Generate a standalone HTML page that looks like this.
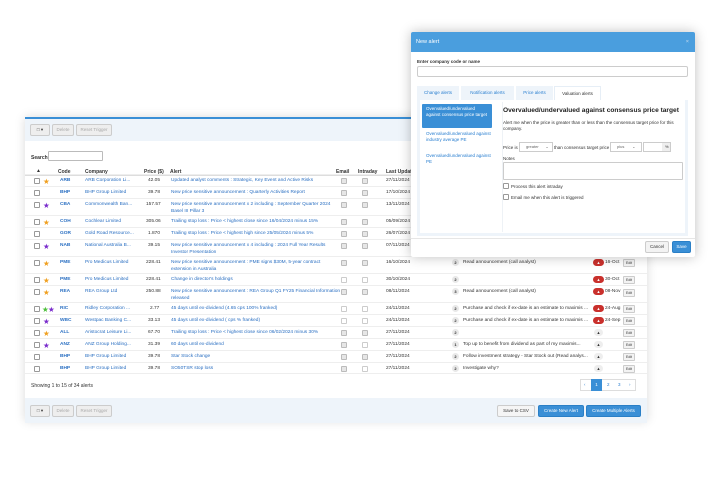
<!DOCTYPE html>
<html><head><meta charset="utf-8"><style>
*{box-sizing:border-box;margin:0;padding:0}
body{width:720px;height:500px;background:#fff;font-family:"Liberation Sans",sans-serif;font-size:5px;color:#333;position:relative;overflow:hidden}
.a{position:absolute;white-space:nowrap}
#panel{position:absolute;left:25px;top:117px;width:622px;height:304px;background:#fff;box-shadow:0 0 10px rgba(0,0,0,.15);border-top:2px solid #3a8fd6}
.band{position:absolute;left:0;width:622px;background:#eef4fa}
.btn{position:absolute;border:1px solid #ccc;background:#eee;border-radius:2px;color:#aaa;font-size:4.5px;text-align:center;line-height:10px;height:12px}
.cb{position:absolute;width:6px;height:6px;border:1px solid #999;border-radius:1px;background:#fff}
.gc{position:absolute;width:6px;height:6px;border:1px solid #bbb;background:#e6e6e6;border-radius:1px}
.ec{position:absolute;width:6px;height:6px;border:1px solid #ccc;background:#fff;border-radius:1px}
.b{color:#2a6fc2}
.code{color:#2a6fc2;font-weight:bold}
.st{position:absolute;font-size:7.5px;line-height:7px}
.bd{position:absolute;width:7px;height:7px;border-radius:50%;background:#e8e8e8;font-size:4px;text-align:center;line-height:7px;font-weight:bold}
.red{position:absolute;width:11px;height:7px;border-radius:4px;background:#c9302c;color:#fff;font-size:4px;text-align:center;line-height:7px}
.gr{position:absolute;width:9px;height:7px;border-radius:4px;background:#eee;color:#333;font-size:4px;text-align:center;line-height:7px}
.ed{position:absolute;width:12px;height:8px;border:1px solid #ccc;background:#f3f3f3;font-size:3.5px;text-align:center;line-height:6px;border-radius:1px}
#modal{position:absolute;left:411px;top:32px;width:284px;height:225px;background:#fff;box-shadow:0 0 12px rgba(0,0,0,.25);border-radius:2px}
.tab{position:absolute;top:54px;height:14px;background:#eef4fa;color:#2a7fd0;font-size:4.5px;line-height:14px;text-align:center}
.R{position:absolute;left:25px;width:622px;border-top:1px solid #eee;font-size:4.8px}
</style></head><body>
<div id="panel">
 <div class="band" style="top:0;height:22px"></div>
 <div class="btn" style="left:5px;top:5px;width:20px;color:#333">&#9633; ▾</div>
 <div class="btn" style="left:27px;top:5px;width:22px">Delete</div>
 <div class="btn" style="left:51px;top:5px;width:36px">Reset Trigger</div>
 <div class="a" style="left:6px;top:36px;font-weight:bold">Search:</div>
 <div class="a" style="left:23px;top:32px;width:55px;height:10px;border:1px solid #bbb;border-radius:1px"></div>
 <div class="a" style="left:0;top:48px;width:622px;height:9px;font-weight:bold;border-bottom:1px solid #ddd">
  <span class="a" style="left:11px;top:1px">▲</span><span class="a" style="left:33px;top:2px">Code</span><span class="a" style="left:60px;top:2px">Company</span><span class="a" style="left:119px;top:2px">Price ($)</span><span class="a" style="left:145px;top:2px">Alert</span><span class="a" style="left:311px;top:2px">Email</span><span class="a" style="left:333px;top:2px">Intraday</span><span class="a" style="left:361px;top:2px">Last Updated</span>
 </div>
 <div class="band" style="top:279px;height:25px"></div>
 <div class="a" style="left:6px;top:264px">Showing 1 to 15 of 34 alerts</div>
 <div class="btn" style="left:5px;top:286px;width:20px;color:#333">&#9633; ▾</div>
 <div class="btn" style="left:27px;top:286px;width:22px">Delete</div>
 <div class="btn" style="left:51px;top:286px;width:36px">Reset Trigger</div>
 <div class="btn" style="left:472px;top:286px;width:38px;color:#333;background:#f5f5f5">Save to CSV</div>
 <div class="btn" style="left:513px;top:286px;width:46px;color:#fff;background:#3a8fd6;border-color:#2a7fc6">Create New Alert</div>
 <div class="btn" style="left:561px;top:286px;width:55px;color:#fff;background:#3a8fd6;border-color:#2a7fc6">Create Multiple Alerts</div>
 <div class="a" style="left:555px;top:260px;width:56px;height:12px;border:1px solid #ddd;color:#2a7fd0;font-size:4.5px;line-height:10px">
  <span class="a" style="left:3px">‹</span><span class="a" style="left:10px;top:-1px;width:11px;height:12px;background:#3a8fd6;color:#fff;text-align:center;line-height:12px">1</span><span class="a" style="left:26px">2</span><span class="a" style="left:37px">3</span><span class="a" style="left:48px">›</span>
 </div>
</div>

<div class="R" style="top:174px;height:12px"><div class="cb" style="left:9px;top:3px"></div><span class="st" style="left:18px;top:3px;color:#f0a020">★</span><span class="a code" style="left:35px;top:3px">ARB</span><span class="a b" style="left:60px;top:3px">ARB Corporation Li...</span><span class="a" style="left:123px;top:3px">42.05</span><span class="a b" style="left:146px;top:3px">Updated analyst comments : Strategic, Key Event and Active Risks</span><span class="gc" style="left:316px;top:3px"></span><span class="gc" style="left:337px;top:3px"></span><span class="a" style="left:361px;top:3px">27/11/2024</span></div>
<div class="R" style="top:186px;height:12px"><div class="cb" style="left:9px;top:3px"></div><span class="a code" style="left:35px;top:3px">BHP</span><span class="a b" style="left:60px;top:3px">BHP Group Limited</span><span class="a" style="left:123px;top:3px">39.78</span><span class="a b" style="left:146px;top:3px">New price sensitive announcement : Quarterly Activities Report</span><span class="gc" style="left:316px;top:3px"></span><span class="gc" style="left:337px;top:3px"></span><span class="a" style="left:361px;top:3px">17/10/2024</span></div>
<div class="R" style="top:198px;height:17px"><div class="cb" style="left:9px;top:3px"></div><span class="st" style="left:18px;top:3px;color:#7a2ccc">★</span><span class="a code" style="left:35px;top:3px">CBA</span><span class="a b" style="left:60px;top:3px">Commonwealth Ban...</span><span class="a" style="left:121px;top:3px">157.57</span><span class="a b" style="left:146px;top:3px;line-height:6.5px">New price sensitive announcement x 2 including : September Quarter 2024<br>Basel III Pillar 3</span><span class="gc" style="left:316px;top:3px"></span><span class="gc" style="left:337px;top:3px"></span><span class="a" style="left:361px;top:3px">13/11/2024</span></div>
<div class="R" style="top:215px;height:12px"><div class="cb" style="left:9px;top:3px"></div><span class="st" style="left:18px;top:3px;color:#f0a020">★</span><span class="a code" style="left:35px;top:3px">COH</span><span class="a b" style="left:60px;top:3px">Cochlear Limited</span><span class="a" style="left:121px;top:3px">305.06</span><span class="a b" style="left:146px;top:3px">Trailing stop loss : Price &lt; highest close since 16/04/2024 minus 15%</span><span class="gc" style="left:316px;top:3px"></span><span class="gc" style="left:337px;top:3px"></span><span class="a" style="left:361px;top:3px">05/09/2024</span></div>
<div class="R" style="top:227px;height:12px"><div class="cb" style="left:9px;top:3px"></div><span class="a code" style="left:35px;top:3px">GOR</span><span class="a b" style="left:60px;top:3px">Gold Road Resource...</span><span class="a" style="left:123px;top:3px">1.870</span><span class="a b" style="left:146px;top:3px">Trailing stop loss : Price &lt; highest high since 25/05/2024 minus 5%</span><span class="gc" style="left:316px;top:3px"></span><span class="gc" style="left:337px;top:3px"></span><span class="a" style="left:361px;top:3px">26/07/2024</span></div>
<div class="R" style="top:239px;height:17px"><div class="cb" style="left:9px;top:3px"></div><span class="st" style="left:18px;top:3px;color:#7a2ccc">★</span><span class="a code" style="left:35px;top:3px">NAB</span><span class="a b" style="left:60px;top:3px">National Australia B...</span><span class="a" style="left:123px;top:3px">39.15</span><span class="a b" style="left:146px;top:3px;line-height:6.5px">New price sensitive announcement x 4 including : 2024 Full Year Results<br>Investor Presentation</span><span class="gc" style="left:316px;top:3px"></span><span class="gc" style="left:337px;top:3px"></span><span class="a" style="left:361px;top:3px">07/11/2024</span></div>
<div class="R" style="top:256px;height:17px"><div class="cb" style="left:9px;top:3px"></div><span class="st" style="left:18px;top:3px;color:#f0a020">★</span><span class="a code" style="left:35px;top:3px">PME</span><span class="a b" style="left:60px;top:3px">Pro Medicus Limited</span><span class="a" style="left:121px;top:3px">228.41</span><span class="a b" style="left:146px;top:3px;line-height:6.5px">New price sensitive announcement : PME signs $30M, 5-year contract<br>extension in Australia</span><span class="gc" style="left:316px;top:3px"></span><span class="gc" style="left:337px;top:3px"></span><span class="a" style="left:361px;top:3px">16/10/2024</span><span class="bd" style="left:427px;top:2px">2</span><span class="a" style="left:438px;top:3px">Read announcement (call analyst)</span><span class="red" style="left:568px;top:2px">▲</span><span class="a" style="left:580px;top:3px">16-Oct</span><span class="ed" style="left:598px;top:2px">Edit</span></div>
<div class="R" style="top:273px;height:12px"><div class="cb" style="left:9px;top:3px"></div><span class="st" style="left:18px;top:3px;color:#f0a020">★</span><span class="a code" style="left:35px;top:3px">PME</span><span class="a b" style="left:60px;top:3px">Pro Medicus Limited</span><span class="a" style="left:121px;top:3px">228.41</span><span class="a b" style="left:146px;top:3px">Change in director's holdings</span><span class="ec" style="left:316px;top:3px"></span><span class="ec" style="left:337px;top:3px"></span><span class="a" style="left:361px;top:3px">30/10/2024</span><span class="bd" style="left:427px;top:2px">2</span><span class="red" style="left:568px;top:2px">▲</span><span class="a" style="left:580px;top:3px">30-Oct</span><span class="ed" style="left:598px;top:2px">Edit</span></div>
<div class="R" style="top:285px;height:17px"><div class="cb" style="left:9px;top:3px"></div><span class="st" style="left:18px;top:3px;color:#f0a020">★</span><span class="a code" style="left:35px;top:3px">REA</span><span class="a b" style="left:60px;top:3px">REA Group Ltd</span><span class="a" style="left:121px;top:3px">250.88</span><span class="a b" style="left:146px;top:3px;line-height:6.5px">New price sensitive announcement : REA Group Q1 FY25 Financial Information<br>released</span><span class="gc" style="left:316px;top:3px"></span><span class="gc" style="left:337px;top:3px"></span><span class="a" style="left:361px;top:3px">08/11/2024</span><span class="bd" style="left:427px;top:2px">3</span><span class="a" style="left:438px;top:3px">Read announcement (call analyst)</span><span class="red" style="left:568px;top:2px">▲</span><span class="a" style="left:580px;top:3px">08-Nov</span><span class="ed" style="left:598px;top:3px">Edit</span></div>
<div class="R" style="top:302px;height:12px"><div class="cb" style="left:9px;top:3px"></div><span class="st" style="left:17px;top:3px;color:#4cbf3a">★</span><span class="st" style="left:23px;top:3px;color:#7a2ccc">★</span><span class="a code" style="left:35px;top:3px">RIC</span><span class="a b" style="left:60px;top:3px">Ridley Corporation ...</span><span class="a" style="left:125px;top:3px">2.77</span><span class="a b" style="left:146px;top:3px">45 days until ex-dividend (4.65 cps 100% franked)</span><span class="ec" style="left:316px;top:3px"></span><span class="ec" style="left:337px;top:3px"></span><span class="a" style="left:361px;top:3px">24/11/2024</span><span class="bd" style="left:427px;top:2px">2</span><span class="a" style="left:438px;top:3px">Purchase and check if ex-date is an estimate to maximis ...</span><span class="red" style="left:568px;top:2px">▲</span><span class="a" style="left:580px;top:3px">24-Aug</span><span class="ed" style="left:598px;top:2px">Edit</span></div>
<div class="R" style="top:314px;height:12px"><div class="cb" style="left:9px;top:3px"></div><span class="st" style="left:18px;top:3px;color:#7a2ccc">★</span><span class="a code" style="left:35px;top:3px">WBC</span><span class="a b" style="left:60px;top:3px">Westpac Banking C...</span><span class="a" style="left:123px;top:3px">33.13</span><span class="a b" style="left:146px;top:3px">45 days until ex-dividend ( cps % franked)</span><span class="ec" style="left:316px;top:3px"></span><span class="ec" style="left:337px;top:3px"></span><span class="a" style="left:361px;top:3px">24/11/2024</span><span class="bd" style="left:427px;top:2px">2</span><span class="a" style="left:438px;top:3px">Purchase and check if ex-date is an estimate to maximis ...</span><span class="red" style="left:568px;top:2px">▲</span><span class="a" style="left:580px;top:3px">24-Sep</span><span class="ed" style="left:598px;top:2px">Edit</span></div>
<div class="R" style="top:326px;height:12px"><div class="cb" style="left:9px;top:3px"></div><span class="st" style="left:18px;top:3px;color:#f0a020">★</span><span class="a code" style="left:35px;top:3px">ALL</span><span class="a b" style="left:60px;top:3px">Aristocrat Leisure Li...</span><span class="a" style="left:123px;top:3px">67.70</span><span class="a b" style="left:146px;top:3px">Trailing stop loss : Price &lt; highest close since 06/02/2024 minus 30%</span><span class="gc" style="left:316px;top:3px"></span><span class="gc" style="left:337px;top:3px"></span><span class="a" style="left:361px;top:3px">27/11/2024</span><span class="bd" style="left:427px;top:2px">2</span><span class="gr" style="left:569px;top:2px">▲</span><span class="ed" style="left:598px;top:2px">Edit</span></div>
<div class="R" style="top:338px;height:12px"><div class="cb" style="left:9px;top:3px"></div><span class="st" style="left:18px;top:3px;color:#7a2ccc">★</span><span class="a code" style="left:35px;top:3px">ANZ</span><span class="a b" style="left:60px;top:3px">ANZ Group Holding...</span><span class="a" style="left:123px;top:3px">31.39</span><span class="a b" style="left:146px;top:3px">60 days until ex-dividend</span><span class="gc" style="left:316px;top:3px"></span><span class="ec" style="left:337px;top:3px"></span><span class="a" style="left:361px;top:3px">27/11/2024</span><span class="bd" style="left:427px;top:2px">1</span><span class="a" style="left:438px;top:3px">Top up to benefit from dividend as part of my maximis...</span><span class="gr" style="left:569px;top:2px">▲</span><span class="ed" style="left:598px;top:2px">Edit</span></div>
<div class="R" style="top:350px;height:12px"><div class="cb" style="left:9px;top:3px"></div><span class="a code" style="left:35px;top:3px">BHP</span><span class="a b" style="left:60px;top:3px">BHP Group Limited</span><span class="a" style="left:123px;top:3px">39.78</span><span class="a b" style="left:146px;top:3px">Star Stock change</span><span class="gc" style="left:316px;top:3px"></span><span class="gc" style="left:337px;top:3px"></span><span class="a" style="left:361px;top:3px">27/11/2024</span><span class="bd" style="left:427px;top:2px">2</span><span class="a" style="left:438px;top:3px">Follow investment strategy - Star Stock out (Read analys...</span><span class="gr" style="left:569px;top:2px">▲</span><span class="ed" style="left:598px;top:2px">Edit</span></div>
<div class="R" style="top:362px;height:12px;border-bottom:1px solid #eee"><div class="cb" style="left:9px;top:3px"></div><span class="a code" style="left:35px;top:3px">BHP</span><span class="a b" style="left:60px;top:3px">BHP Group Limited</span><span class="a" style="left:123px;top:3px">39.78</span><span class="a b" style="left:146px;top:3px">SO50TSR stop loss</span><span class="gc" style="left:316px;top:3px"></span><span class="ec" style="left:337px;top:3px"></span><span class="a" style="left:361px;top:3px">27/11/2024</span><span class="bd" style="left:427px;top:2px">2</span><span class="a" style="left:438px;top:3px">Investigate why?</span><span class="gr" style="left:569px;top:2px">▲</span><span class="ed" style="left:598px;top:2px">Edit</span></div>

<div id="modal">
 <div class="a" style="left:0;top:0;width:284px;height:20px;background:#4a9ede;color:#fff;font-size:5.5px;line-height:20px;padding-left:5px;border-radius:2px 2px 0 0">New alert<span class="a" style="right:6px;top:0;color:#cde">×</span></div>
 <div class="a" style="left:6px;top:27px;font-weight:bold;font-size:4.5px">Enter company code or name</div>
 <div class="a" style="left:6px;top:34px;width:271px;height:11px;border:1px solid #ccc;border-radius:2px"></div>
 <div class="tab" style="left:6px;width:42px">Change alerts</div>
 <div class="tab" style="left:50px;width:53px">Notification alerts</div>
 <div class="tab" style="left:105px;width:37px">Price alerts</div>
 <div class="tab" style="left:143px;width:47px;background:#fff;color:#333;border:1px solid #e6eef6;border-bottom:none">Valuation alerts</div>
 <div class="a" style="left:6px;top:68px;width:271px;height:136px;border:3px solid #eef4fa;border-top:none"></div>
 <div class="a" style="left:91px;top:70px;width:1px;height:130px;background:#eef2f6"></div>
 <div class="a" style="left:11px;top:72px;width:70px;height:24px;background:#3a8fd6;color:#fff;font-size:4.5px;line-height:6px;padding:2px 4px;white-space:normal;border-radius:1px">Overvalued/undervalued against consensus price target</div>
 <div class="a" style="left:15px;top:99px;width:66px;color:#2a7fd0;font-size:4.5px;line-height:6px;white-space:normal">Overvalued/undervalued against industry average PE</div>
 <div class="a" style="left:15px;top:121px;width:66px;color:#2a7fd0;font-size:4.5px;line-height:6px;white-space:normal">Overvalued/undervalued against PE</div>
 <div class="a" style="left:92px;top:75px;font-size:6.6px;font-weight:bold;color:#222">Overvalued/undervalued against consensus price target</div>
 <div class="a" style="left:92px;top:88px;width:178px;font-size:4.5px;line-height:6px;white-space:normal">Alert me when the price is greater than or less than the consensus target price for this company.</div>
 <div class="a" style="left:92px;top:113px;font-size:4.5px">Price is</div>
 <div class="a" style="left:108px;top:110px;width:34px;height:10px;border:1px solid #ccc;font-size:4px;line-height:8px;padding-left:6px;color:#666">greater &nbsp; &nbsp; &nbsp;⌄</div>
 <div class="a" style="left:143px;top:113px;font-size:4.5px">than consensus target price</div>
 <div class="a" style="left:199px;top:110px;width:32px;height:10px;border:1px solid #ccc;font-size:4px;line-height:8px;padding-left:6px;color:#666">plus &nbsp; &nbsp; &nbsp; ⌄</div>
 <div class="a" style="left:232px;top:110px;width:28px;height:10px;border:1px solid #ccc;background:linear-gradient(to right,#fff 18px,#eee 18px);font-size:4px;line-height:8px;padding-left:21px">%</div>
 <div class="a" style="left:92px;top:124px;font-size:4.5px">Notes</div>
 <div class="a" style="left:92px;top:130px;width:180px;height:18px;border:1px solid #ccc;border-radius:1px"></div>
 <div class="cb" style="left:92px;top:151px"></div><div class="a" style="left:100px;top:152px;font-size:4.5px">Process this alert intraday</div>
 <div class="cb" style="left:92px;top:162px"></div><div class="a" style="left:100px;top:163px;font-size:4.5px">Email me when this alert is triggered</div>
 <div class="a" style="left:0;top:206px;width:284px;height:1px;background:#e6e6e6"></div>
 <div class="btn" style="left:234px;top:209px;width:24px;color:#333;background:#f3f3f3">Cancel</div>
 <div class="btn" style="left:261px;top:209px;width:19px;color:#fff;background:#3a8fd6;border-color:#2a7fc6">Save</div>
</div>
</body></html>
